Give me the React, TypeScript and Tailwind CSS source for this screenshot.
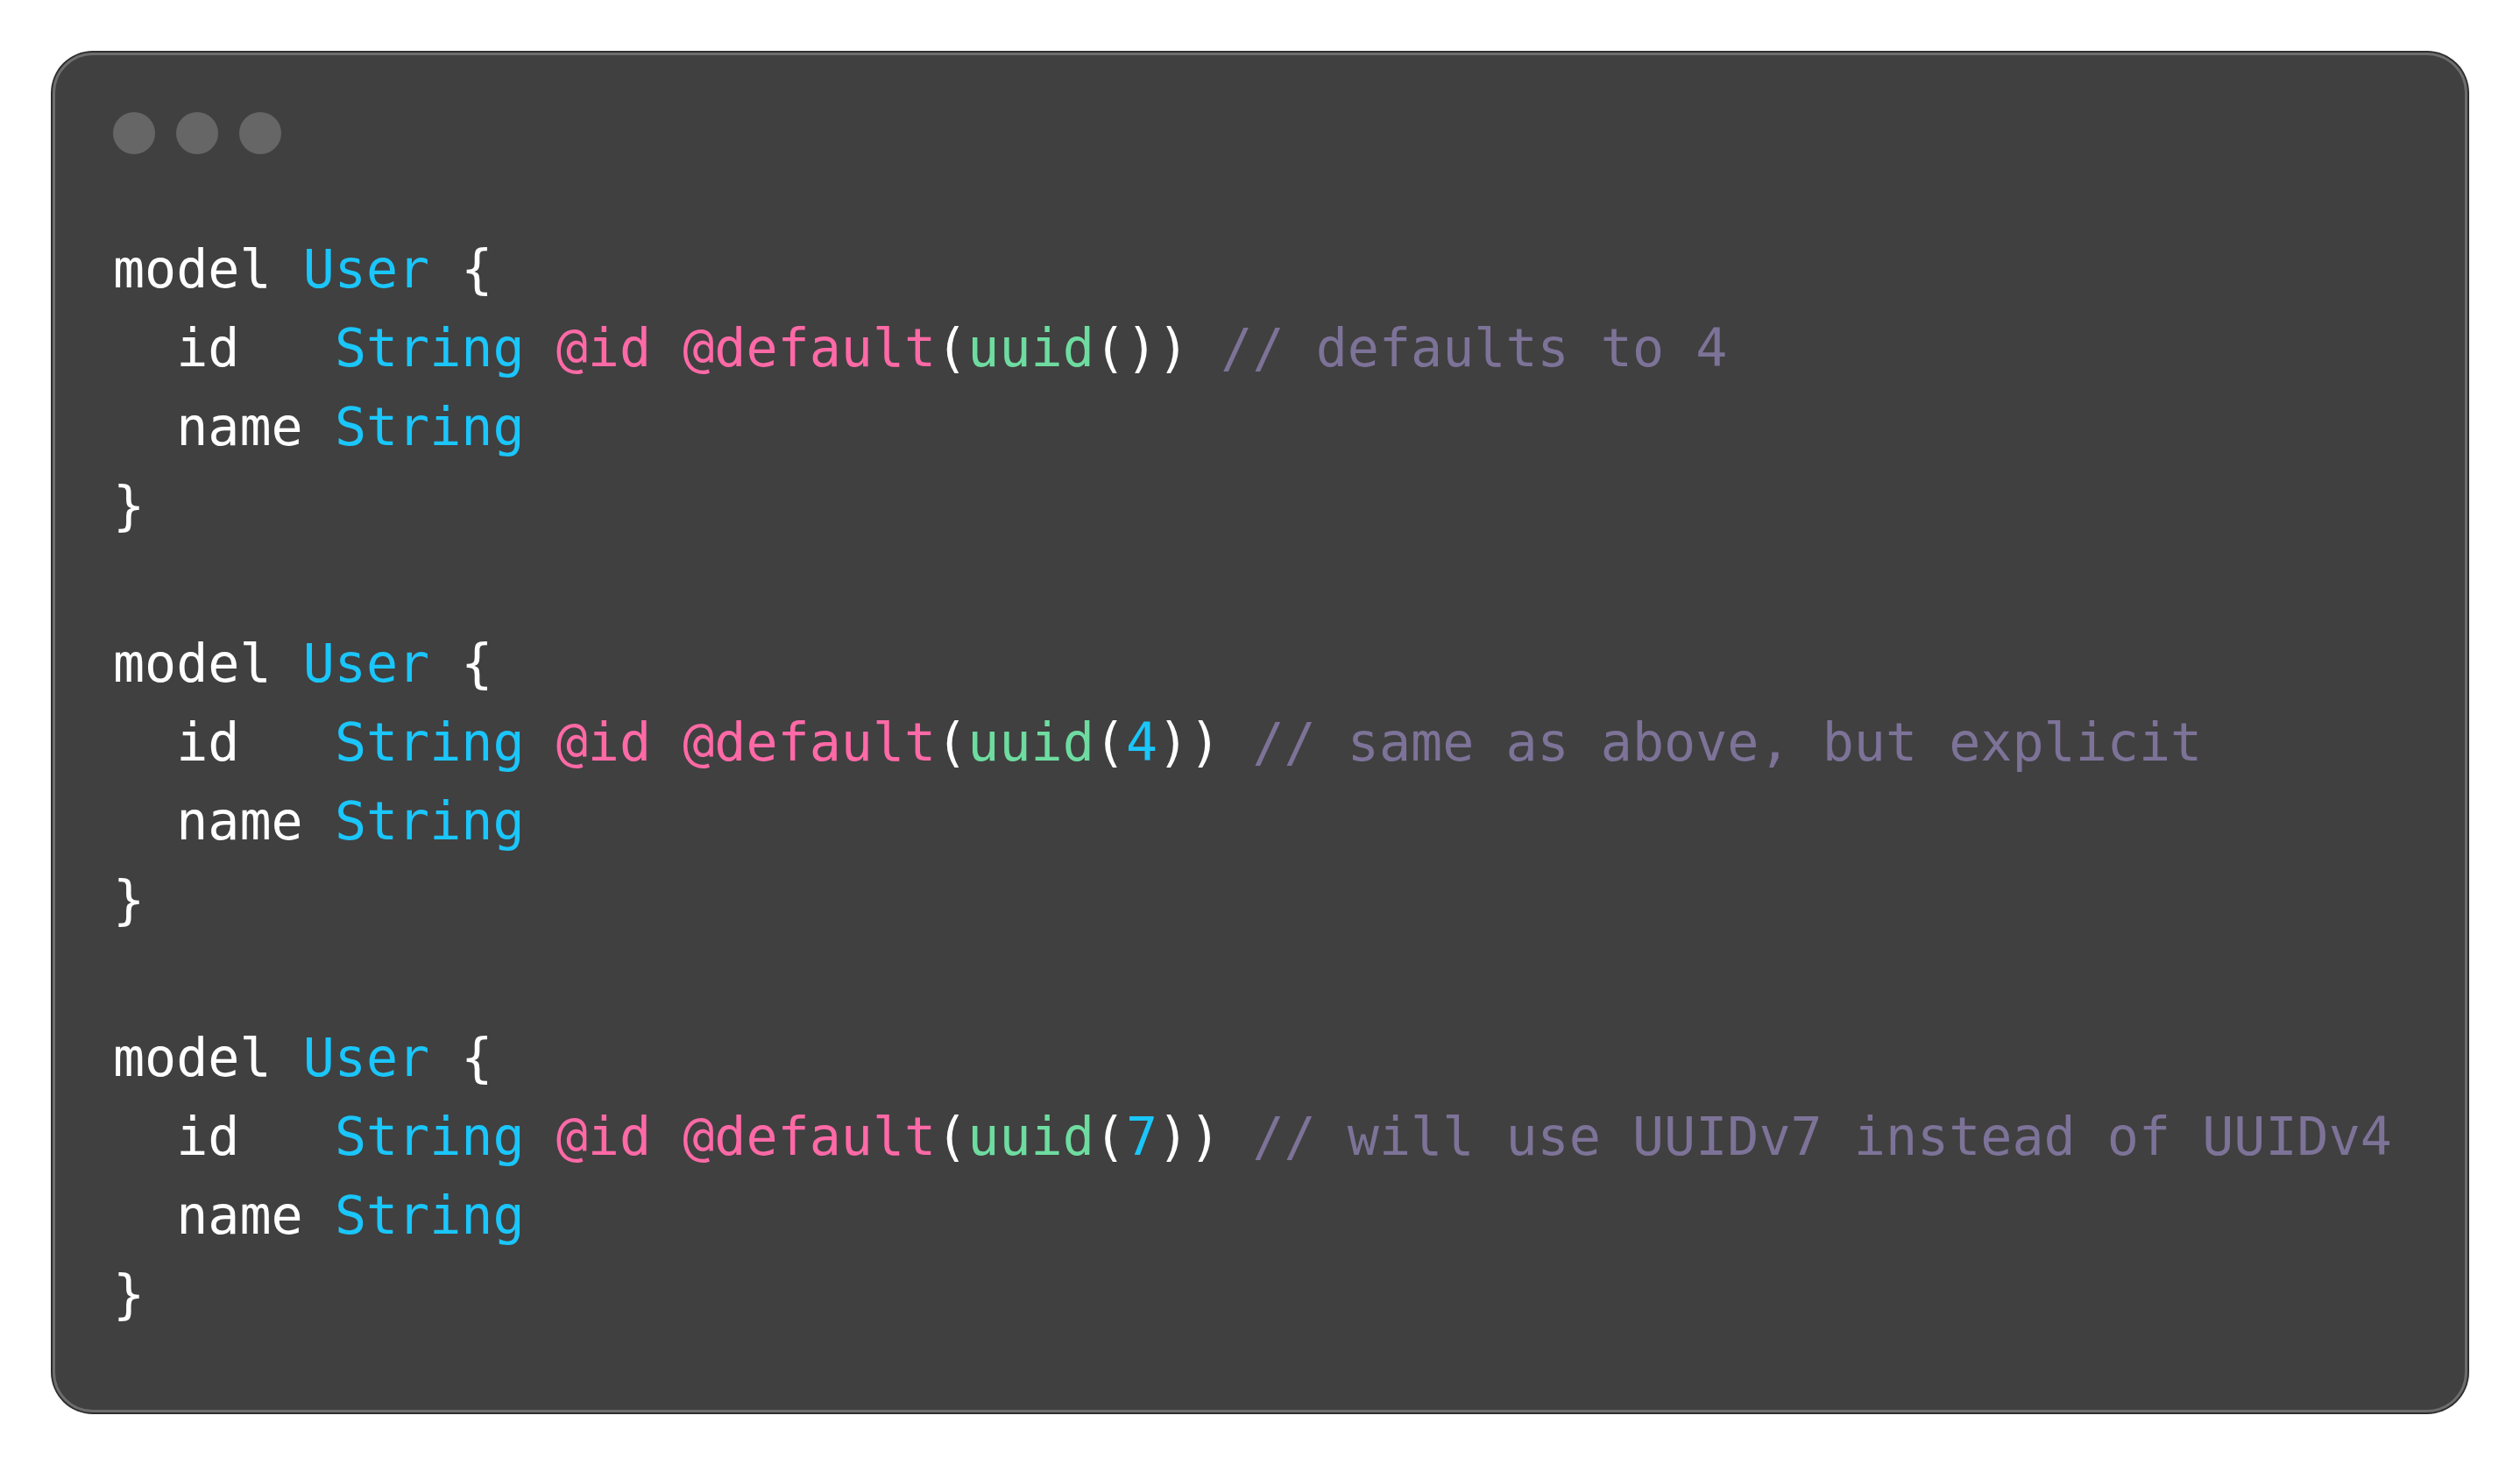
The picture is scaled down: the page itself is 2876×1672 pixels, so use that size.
type Tok = { t: string; c?: string };

const W = "text-white";
const BLUE = "text-[#1ac6fb]";
const PINK = "text-[#ff69a6]";
const GREEN = "text-[#6edca0]";
const GRAY = "text-[#7d7398]";

function block(arg: Tok[], comment: string): Tok[][] {
  return [
    [{ t: "model " }, { t: "User", c: BLUE }, { t: " {" }],
    [
      { t: "  id   " },
      { t: "String", c: BLUE },
      { t: " " },
      { t: "@id @default", c: PINK },
      { t: "(" },
      { t: "uuid", c: GREEN },
      { t: "(" },
      ...arg,
      { t: "))" },
      { t: " " + comment, c: GRAY },
    ],
    [{ t: "  name " }, { t: "String", c: BLUE }],
    [{ t: "}" }],
  ];
}

const LINES: Tok[][] = [
  ...block([], "// defaults to 4"),
  [],
  ...block([{ t: "4", c: BLUE }], "// same as above, but explicit"),
  [],
  ...block([{ t: "7", c: BLUE }], "// will use UUIDv7 instead of UUIDv4"),
];

export default function App() {
  return (
    <div className="flex h-[1672px] w-[2876px] bg-white p-[60px]">
      <div className="flex flex-1 flex-col rounded-[46px] border-[3px] border-[#6d6d6d] bg-[#404040] px-[66px] pt-[65px] shadow-[0_0_0_2px_#2e2e2e]">
        <div className="flex gap-[24px]">
          <span className="size-[48px] rounded-full bg-[#666666]" />
          <span className="size-[48px] rounded-full bg-[#666666]" />
          <span className="size-[48px] rounded-full bg-[#666666]" />
        </div>
        <pre
          className="mt-[86px] whitespace-pre text-[60px] leading-[90px] text-white"
          style={{ fontFamily: '"DejaVu Sans Mono", monospace' }}
        >
          {LINES.map((line, i) => (
            <div key={i} className="h-[90px]">
              {line.map((tok, j) => (
                <span key={j} className={tok.c ?? W}>
                  {tok.t}
                </span>
              ))}
            </div>
          ))}
        </pre>
      </div>
    </div>
  );
}
